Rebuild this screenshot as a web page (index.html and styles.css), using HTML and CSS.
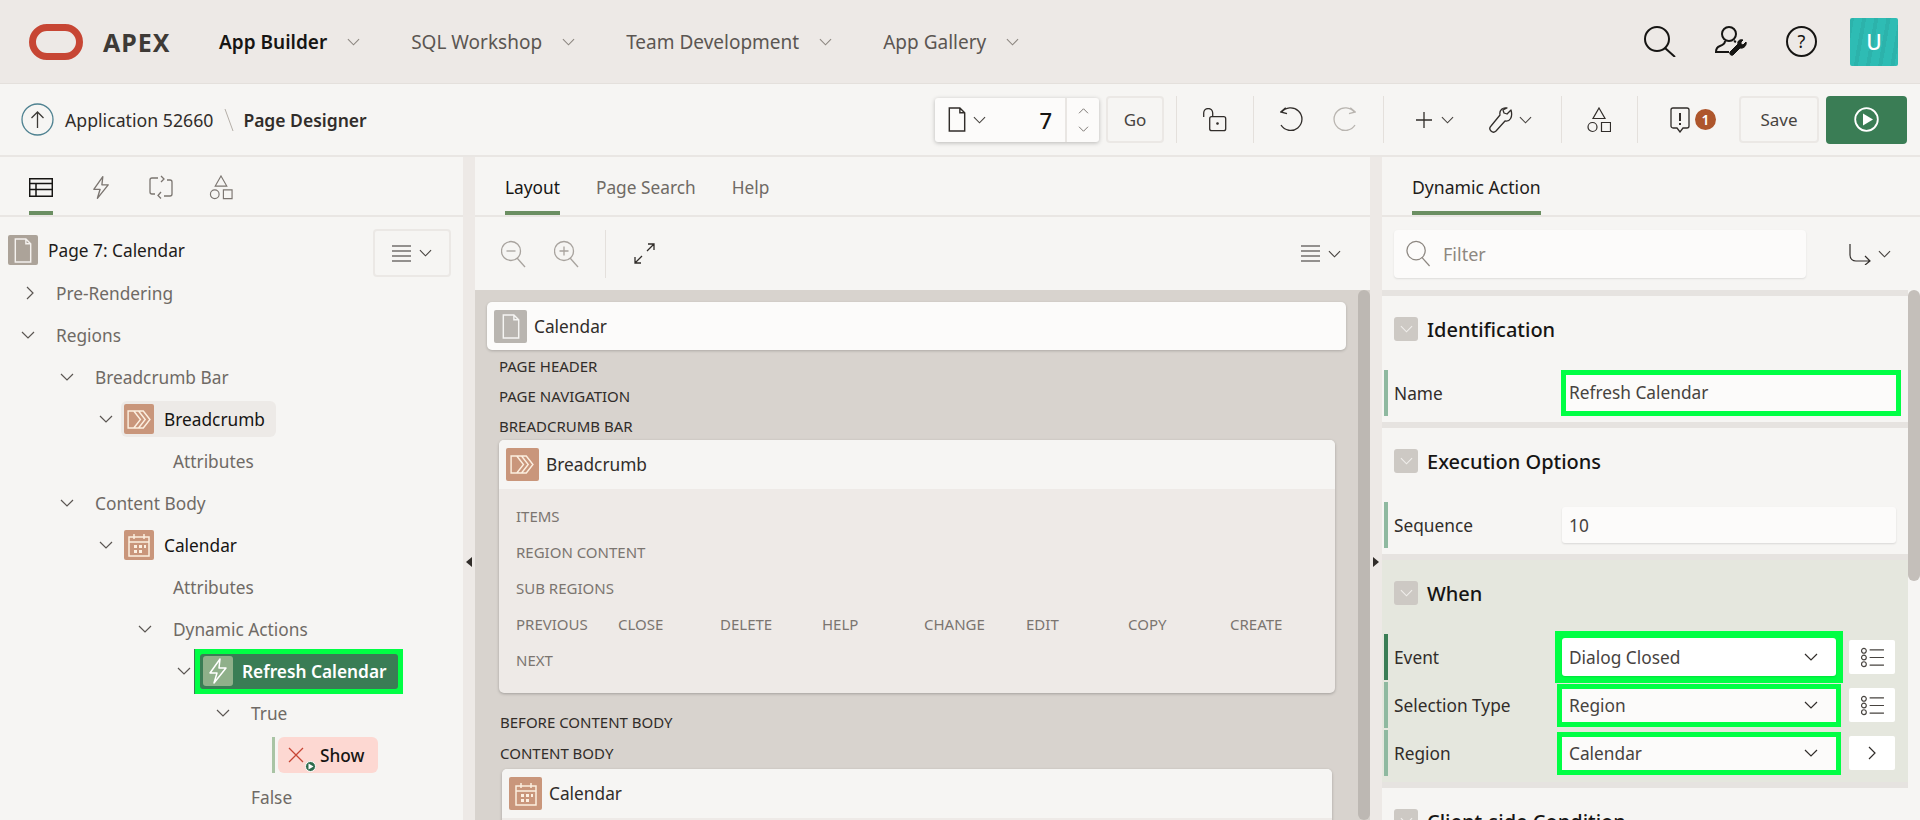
FILE: index.html
```html
<!DOCTYPE html>
<html lang="en">
<head>
    <meta charset="UTF-8">
    <title>Page Designer</title>
    <link rel="stylesheet" href="styles.css">
</head>
<body>
    <svg class="defs" width="0" height="0">
        <symbol id="chev" viewBox="0 0 14 8"><path d="M1 1l6 6 6-6" fill="none" stroke="currentColor" stroke-width="1.2"/></symbol>
        <symbol id="lines" viewBox="0 0 19 17"><path d="M0 1h19M0 6h19M0 11h19M0 16h19" stroke="currentColor" stroke-width="1.2"/></symbol>
        <symbol id="shapes" viewBox="0 0 24 26"><path d="M12 1l6 10.500H6zM14.500 15.500h9v9h-9z" fill="none" stroke="currentColor" stroke-width="1.200"/><circle cx="5.500" cy="20" r="4.500" fill="none" stroke="currentColor" stroke-width="1.200"/></symbol>
        <symbol id="bolt" viewBox="0 0 20 26"><path d="M12 1L2 15h7l-3 10 12-15h-7z" fill="none" stroke="currentColor" stroke-width="1.500" stroke-linejoin="round"/></symbol>
        <symbol id="doc" viewBox="0 0 18 26"><path d="M1 1h11l5 5v19H1zM12 1v5h5" fill="none" stroke="currentColor" stroke-width="1.500"/></symbol>
        <symbol id="crumb" viewBox="0 0 26 20"><path d="M1 1h16l7 9-7 9H1zM7 1l7 9-7 9M12 1l7 9-7 9" fill="none" stroke="currentColor" stroke-width="1.500"/></symbol>
        <symbol id="cal" viewBox="0 0 22 24"><path d="M1 4h20v19H1zM1 9h20M6 1v5M16 1v5" fill="none" stroke="currentColor" stroke-width="1.500"/><path d="M6 12h3v3H6zM11 12h3v3h-3zM16 12h2v3h-2zM6 17h3v3H6zM11 17h3v3h-3z" fill="currentColor"/></symbol>
        <symbol id="listopt" viewBox="0 0 26 22"><circle cx="4" cy="4" r="2.500" fill="none" stroke="currentColor" stroke-width="1.200"/><circle cx="4" cy="11" r="2.500" fill="none" stroke="currentColor" stroke-width="1.200"/><circle cx="4" cy="18" r="2.500" fill="none" stroke="currentColor" stroke-width="1.200"/><path d="M10 3h15M10 11h15M10 19h15" stroke="currentColor" stroke-width="1.200"/></symbol>
        <symbol id="wrench" viewBox="0 0 24 26"><path d="M22 3l-4 4-3-1-1-3 4-2c-4-1-8 2-7 7L2 19c-2 2-1 4 0 5s3 2 5 0l9-10c5 1 8-4 6-11z" fill="none" stroke="currentColor" stroke-width="1.300" stroke-linejoin="round"/></symbol>
        <symbol id="zoomlens" viewBox="0 0 25 28"><circle cx="10" cy="11" r="9.500" fill="none" stroke="currentColor" stroke-width="1.300"/><path d="M16 18l8 9" stroke="currentColor" stroke-width="1.300"/></symbol>
    </svg>

    <header class="topbar">
        <div class="logo">
            <svg width="54" height="36" viewBox="0 0 54 36"><rect x="3.500" y="3.500" width="47" height="29" rx="14.500" fill="none" stroke="#c74634" stroke-width="7"/></svg>
            <span class="logo-text">APEX</span>
        </div>
        <nav class="mainnav">
            <a class="navitem active">App Builder <svg class="navchev"><use href="#chev"/></svg></a>
            <a class="navitem">SQL Workshop <svg class="navchev"><use href="#chev"/></svg></a>
            <a class="navitem">Team Development <svg class="navchev"><use href="#chev"/></svg></a>
            <a class="navitem">App Gallery <svg class="navchev"><use href="#chev"/></svg></a>
        </nav>
        <div class="topicons">
            <svg width="32" height="31" viewBox="0 0 32 31" fill="none" stroke="#161513" stroke-width="2"><circle cx="13" cy="13" r="12"/><path d="M21 22l10 9"/></svg>
            <svg width="32" height="31" viewBox="0 0 32 31" fill="none" stroke="#161513" stroke-width="2"><circle cx="14" cy="8" r="7"/><path d="M10 15c0 3-2 4-5 5-3 1-4 3-4 6h13M19 15l2 1"/><path d="M31 16l-3 3-2-1 0-2 2-2c-3-1-6 1-5 4l-8 8c-1 2 1 4 3 3l7-7c4 1 7-3 6-6z" fill="#161513" stroke-width="1"/></svg>
            <svg class="helpicon" width="31" height="31" viewBox="0 0 31 31"><circle cx="15.500" cy="15.500" r="14.500" fill="none" stroke="#161513" stroke-width="2"/><text x="15.500" y="21.500" text-anchor="middle" class="helpmark">?</text></svg>
            <div class="avatar">U</div>
        </div>
    </header>

    <div class="toolbar">
        <div class="crumbs">
            <svg width="33" height="33" viewBox="0 0 33 33" fill="none"><circle cx="16.500" cy="16.500" r="15.500" stroke="#4f8291" stroke-width="1.300"/><path d="M16.500 25V9M10.500 15l6-6 6 6" stroke="#3d3a36" stroke-width="1.300"/></svg>
            <span class="crumb-app">Application 52660</span>
            <svg width="10" height="24" viewBox="0 0 10 24"><path d="M1 1l8 22" stroke="#b5afa8"/></svg>
            <span class="crumb-page">Page Designer</span>
        </div>
        <div class="tools">
            <div class="pagepick">
                <div class="pagepick-main">
                    <svg width="18" height="25" class="ink"><use href="#doc"/></svg>
                    <svg class="chev-sm ink2"><use href="#chev"/></svg>
                    <span class="pagenum">7</span>
                </div>
                <div class="pagepick-spin">
                    <svg class="chev-xs flip"><use href="#chev"/></svg>
                    <svg class="chev-xs"><use href="#chev"/></svg>
                </div>
            </div>
            <button class="btn go">Go</button>
            <span class="sep sep-a"></span>
            <svg class="lock" width="24" height="24" viewBox="0 0 24 24" fill="none" stroke="#312d2a" stroke-width="1.300"><rect x="6.700" y="8.700" width="16" height="14" rx="2"/><path d="M.700 9V5a4.500 4.500 0 0 1 9 0v3.500"/><circle cx="14.500" cy="15.500" r=".7" fill="#312d2a"/></svg>
            <span class="sep sep-b"></span>
            <svg class="undo" width="24" height="26" viewBox="0 0 24 26" fill="none" stroke="#312d2a" stroke-width="1.300"><path d="M1.500 5.500A11.300 11.300 0 1 1 1 18M5.700.700L.700 5 7 6.700"/></svg>
            <svg class="redo" width="24" height="26" viewBox="0 0 24 26" fill="none" stroke="#b9b5b0" stroke-width="1.300"><path d="M22.500 5.500A11.300 11.300 0 1 0 23 18M18.300.700L23.300 5 17 6.700"/></svg>
            <span class="sep sep-c"></span>
            <svg class="plus" width="16" height="16" viewBox="0 0 16 16"><path d="M8 0v16M0 8h16" stroke="#312d2a" stroke-width="1.300"/></svg>
            <svg class="chev-sm after-plus ink2"><use href="#chev"/></svg>
            <svg class="wrench ink" width="24" height="26"><use href="#wrench"/></svg>
            <svg class="chev-sm after-wrench ink2"><use href="#chev"/></svg>
            <span class="sep sep-d"></span>
            <svg class="shapes ink" width="24" height="26"><use href="#shapes"/></svg>
            <span class="sep sep-e"></span>
            <svg class="msg" width="20" height="26" viewBox="0 0 20 26" fill="none" stroke="#312d2a" stroke-width="1.300"><path d="M3 1h14a2 2 0 0 1 2 2v16a2 2 0 0 1-2 2h-4l-3 4-3-4H3a2 2 0 0 1-2-2V3a2 2 0 0 1 2-2z"/><path d="M10 6v8M10 16v2" stroke-width="2"/></svg>
            <span class="badge">1</span>
            <button class="btn save">Save</button>
            <button class="btn run">
                <svg width="25" height="25" viewBox="0 0 25 25"><circle cx="12.500" cy="12.500" r="11.300" fill="none" stroke="#fff" stroke-width="1.800"/><path d="M9 6.500l10 6-10 6z" fill="#fff"/></svg>
            </button>
        </div>
    </div>

    <main class="designer">
        <section class="panel panel-left">
            <div class="tabs tabs-icons">
                <a class="tab-icon active">
                    <svg width="24" height="19" viewBox="0 0 24 19" fill="none" stroke="#161513" stroke-width="1.500"><path d="M.700.700h22.600v17.600H.700zM.700 5.500h22.600M.700 11.500h22.600M7 5.500v13"/></svg>
                </a>
                <a class="tab-icon gap-a"><svg class="grey" width="18" height="25"><use href="#bolt"/></svg></a>
                <a class="tab-icon gap-b">
                    <svg width="24" height="24" viewBox="0 0 24 24" fill="none" stroke="#7b7570" stroke-width="1.300"><path d="M9 3H3a2 2 0 0 0-2 2v12a2 2 0 0 0 2 2h3M15 21h6a2 2 0 0 0 2-2V7a2 2 0 0 0-2-2h-3M12 1l3 3-3 3M12 17l-3 3.500 3 3"/></svg>
                </a>
                <a class="tab-icon gap-c"><svg class="grey" width="24" height="25"><use href="#shapes"/></svg></a>
            </div>
            <div class="tree">
                <div class="tree-root">
                    <span class="node-icon grey-bg"><svg width="18" height="25"><use href="#doc"/></svg></span>
                    <span class="root-label">Page 7: Calendar</span>
                    <button class="menu-btn"><svg class="lines-ic"><use href="#lines"/></svg><svg class="chev-sm ink2"><use href="#chev"/></svg></button>
                </div>
                <div class="row l0"><svg class="tw right" width="8" height="14" viewBox="0 0 8 14"><path d="M1 1l6 6-6 6" fill="none" stroke="#5b5652" stroke-width="1.200"/></svg><span class="lbl">Pre-Rendering</span></div>
                <div class="row l0"><svg class="tw"><use href="#chev"/></svg><span class="lbl">Regions</span></div>
                <div class="row l1"><svg class="tw"><use href="#chev"/></svg><span class="lbl">Breadcrumb Bar</span></div>
                <div class="row l2">
                    <svg class="tw"><use href="#chev"/></svg>
                    <span class="chip chip-hover"><span class="node-icon tan"><svg width="25" height="19"><use href="#crumb"/></svg></span><span class="lbl dark">Breadcrumb</span></span>
                </div>
                <div class="row l3 leaf"><span class="lbl">Attributes</span></div>
                <div class="row l1"><svg class="tw"><use href="#chev"/></svg><span class="lbl">Content Body</span></div>
                <div class="row l2">
                    <svg class="tw"><use href="#chev"/></svg>
                    <span class="chip"><span class="node-icon tan"><svg width="22" height="24"><use href="#cal"/></svg></span><span class="lbl dark">Calendar</span></span>
                </div>
                <div class="row l3 leaf"><span class="lbl">Attributes</span></div>
                <div class="row l3"><svg class="tw"><use href="#chev"/></svg><span class="lbl">Dynamic Actions</span></div>
                <div class="row l4">
                    <svg class="tw"><use href="#chev"/></svg>
                    <span class="chip-frame">
                        <span class="chip-selected"><span class="node-icon bolt-bg"><svg width="20" height="26"><use href="#bolt"/></svg></span><span class="lbl sel">Refresh Calendar</span></span>
                    </span>
                </div>
                <div class="row l5"><svg class="tw"><use href="#chev"/></svg><span class="lbl">True</span></div>
                <div class="row l6">
                    <span class="action-bar"></span>
                    <span class="chip-show">
                        <svg width="16" height="16" viewBox="0 0 16 16"><path d="M1 1l14 14M15 1L1 15" stroke="#c74634" stroke-width="1.300"/></svg>
                        <span class="run-dot"><svg width="9" height="9" viewBox="0 0 9 9"><path d="M2.500 1.500l5 3-5 3z" fill="#fff"/></svg></span>
                        <span class="lbl dark show-lbl">Show</span>
                    </span>
                </div>
                <div class="row l5 leaf"><span class="lbl">False</span></div>
            </div>
            <span class="grip grip-left"></span>
        </section>

        <section class="panel panel-mid">
            <div class="tabs">
                <a class="tab active">Layout</a>
                <a class="tab">Page Search</a>
                <a class="tab">Help</a>
            </div>
            <div class="mid-tools">
                <svg width="25" height="28" viewBox="0 0 25 28" fill="none" stroke="currentColor" stroke-width="1.300"><use href="#zoomlens"/><path d="M5.500 11h9"/></svg>
                <svg class="lens-in" width="25" height="28" viewBox="0 0 25 28" fill="none" stroke="currentColor" stroke-width="1.300"><use href="#zoomlens"/><path d="M5.500 11h9M10 6.500v9"/></svg>
                <span class="sep mid-sep"></span>
                <svg class="expand" width="21" height="21" viewBox="0 0 21 21" fill="none" stroke="#312d2a" stroke-width="1.300"><path d="M1 20l7-7M13 8l7-7M14 1h6v6M1 14v6h6"/></svg>
                <span class="spacer"></span>
                <svg class="lines-ic"><use href="#lines"/></svg>
                <svg class="chev-sm ink2"><use href="#chev"/></svg>
            </div>
            <div class="canvas">
                <div class="page-card">
                    <span class="node-icon grey-light"><svg width="18" height="25"><use href="#doc"/></svg></span>
                    <span class="card-title">Calendar</span>
                </div>
                <div class="slot s1">PAGE HEADER</div>
                <div class="slot s2">PAGE NAVIGATION</div>
                <div class="slot s3">BREADCRUMB BAR</div>
                <div class="region">
                    <div class="region-head">
                        <span class="node-icon tan big"><svg width="25" height="19"><use href="#crumb"/></svg></span>
                        <span class="card-title">Breadcrumb</span>
                    </div>
                    <div class="region-body">
                        <div class="sub">ITEMS</div>
                        <div class="sub">REGION CONTENT</div>
                        <div class="sub">SUB REGIONS</div>
                        <div class="sub-grid">
                            <span>PREVIOUS</span><span>CLOSE</span><span>DELETE</span><span>HELP</span>
                            <span>CHANGE</span><span>EDIT</span><span>COPY</span><span>CREATE</span>
                            <span>NEXT</span>
                        </div>
                    </div>
                </div>
                <div class="slot s4">BEFORE CONTENT BODY</div>
                <div class="slot s5">CONTENT BODY</div>
                <div class="region region-cal">
                    <div class="region-head">
                        <span class="node-icon tan big"><svg width="22" height="24"><use href="#cal"/></svg></span>
                        <span class="card-title">Calendar</span>
                    </div>
                    <div class="region-body"></div>
                </div>
                <span class="scroll-thumb mid-thumb"></span>
            </div>
        </section>

        <section class="panel panel-right">
            <div class="tabs">
                <a class="tab active da">Dynamic Action</a>
            </div>
            <div class="filter-row">
                <div class="filter">
                    <svg width="25" height="27" class="filter-lens"><use href="#zoomlens"/></svg>
                    <span>Filter</span>
                </div>
                <svg class="collapse" width="22" height="22" viewBox="0 0 22 22" fill="none" stroke="#312d2a" stroke-width="1.200"><path d="M1 1v11c0 4 3 6 6 6h14M16 13l5 5-5 4"/></svg>
                <svg class="chev-sm ink2"><use href="#chev"/></svg>
            </div>
            <div class="props">
                <div class="group g-id">
                    <h3 class="group-title"><span class="toggle"><svg><use href="#chev"/></svg></span>Identification</h3>
                    <div class="prop">
                        <span class="prop-label">Name</span>
                        <div class="field marked name-field"><span>Refresh Calendar</span></div>
                    </div>
                </div>
                <div class="group g-exec">
                    <h3 class="group-title"><span class="toggle"><svg><use href="#chev"/></svg></span>Execution Options</h3>
                    <div class="prop">
                        <span class="prop-label">Sequence</span>
                        <div class="field"><span>10</span></div>
                    </div>
                </div>
                <div class="group g-when">
                    <h3 class="group-title"><span class="toggle"><svg><use href="#chev"/></svg></span>When</h3>
                    <div class="prop req">
                        <span class="prop-label">Event</span>
                        <div class="field-frame">
                            <div class="field select white"><span>Dialog Closed</span><svg class="chev-sel"><use href="#chev"/></svg></div>
                        </div>
                        <button class="sidebtn"><svg width="25" height="21"><use href="#listopt"/></svg></button>
                    </div>
                    <div class="prop">
                        <span class="prop-label">Selection Type</span>
                        <div class="field marked select short"><span>Region</span><svg class="chev-sel"><use href="#chev"/></svg></div>
                        <button class="sidebtn"><svg width="25" height="21"><use href="#listopt"/></svg></button>
                    </div>
                    <div class="prop">
                        <span class="prop-label">Region</span>
                        <div class="field marked select short"><span>Calendar</span><svg class="chev-sel"><use href="#chev"/></svg></div>
                        <button class="sidebtn"><svg width="8" height="14" viewBox="0 0 8 14"><path d="M1 1l6 6-6 6" fill="none" stroke="#312d2a" stroke-width="1.200"/></svg></button>
                    </div>
                </div>
                <div class="group g-client">
                    <h3 class="group-title"><span class="toggle"><svg><use href="#chev"/></svg></span>Client-side Condition</h3>
                </div>
                <span class="scroll-thumb right-thumb"></span>
            </div>
            <span class="grip grip-right"></span>
        </section>
    </main>
</body>
</html>
```
FILE: styles.css
```css
html, body {
    margin: 0;
    height: 820px;
    overflow: hidden;
}
body {
    font-family: "Noto Sans", sans-serif;
    font-size: 16px;
    color: #312d2a;
    background-color: #ede9e6;
}
.defs {
    position: absolute;
}
button {
    font-family: inherit;
}
svg {
    display: block;
    flex: none;
}
.ink {
    color: #312d2a;
}
.ink2 {
    color: #47433f;
}

/* top header */
.topbar {
    height: 83px;
    display: flex;
    align-items: center;
    padding: 0 22px 0 29px;
    border-bottom: 1px solid #e4e0dc;
}
.logo {
    display: flex;
    align-items: center;
    gap: 20px;
    width: 190px;
}
.logo-text {
    font-size: 25px;
    font-weight: 700;
    letter-spacing: 1px;
    color: #3e3a36;
}
.mainnav {
    display: flex;
    flex: 1;
}
.navitem {
    display: flex;
    align-items: center;
    gap: 20px;
    margin-right: 51px;
    font-size: 19px;
    color: #5b5652;
}
.navitem.active {
    color: #161513;
    font-weight: 600;
}
.navchev {
    width: 13px;
    height: 8px;
    color: #8d8781;
}
.topicons {
    display: flex;
    align-items: center;
    gap: 39px;
}
.helpmark {
    font-size: 18px;
    fill: #161513;
}
.avatar {
    width: 48px;
    height: 48px;
    border-radius: 2px;
    background-color: #2ebcb4;
    background-image: repeating-linear-gradient(100deg, rgba(0, 0, 0, .05) 0 4px, transparent 4px 12px);
    color: #fff;
    font-size: 21px;
    font-weight: 500;
    display: flex;
    align-items: center;
    justify-content: center;
    margin-left: -6px;
}

/* second bar */
.toolbar {
    height: 71px;
    display: flex;
    align-items: center;
    justify-content: space-between;
    padding: 0 13px 0 21px;
    background-color: #f6f5f3;
    border-bottom: 2px solid #e9e6e3;
}
.crumbs {
    display: flex;
    align-items: center;
}
.crumb-app {
    margin-left: 11px;
    margin-right: 11px;
    font-size: 17.7px;
}
.crumb-page {
    margin-left: 9px;
    font-size: 17.5px;
    font-weight: 600;
}
.tools {
    display: flex;
    align-items: center;
}
.pagepick {
    width: 164px;
    height: 44px;
    display: flex;
    background-color: #fcfbfa;
    border-radius: 3px;
    box-shadow: 0 1px 4px rgba(0, 0, 0, .25);
}
.pagepick-main {
    flex: 1;
    display: flex;
    align-items: center;
    padding: 0 13px;
    gap: 7px;
}
.pagenum {
    margin-left: auto;
    font-size: 22px;
    color: #161513;
    font-weight: 500;
}
.pagepick-spin {
    width: 34px;
    border-left: 2px solid #e9e6e3;
    display: flex;
    flex-direction: column;
    align-items: center;
    justify-content: space-around;
    padding: 4px 0;
    box-sizing: border-box;
}
.chev-sm {
    width: 13px;
    height: 8px;
}
.chev-xs {
    width: 11px;
    height: 6px;
    color: #6f6a65;
}
.flip {
    transform: scaleY(-1);
}
.btn {
    height: 47px;
    background-color: #f6f5f3;
    border: 2px solid #ebe8e5;
    border-radius: 4px;
    font-size: 17px;
    color: #47433f;
    padding: 0;
}
.btn.go {
    width: 58px;
    margin-left: 7px;
}
.sep {
    width: 1px;
    height: 47px;
    background-color: #e4e0dc;
}
.sep-a {
    margin-left: 12px;
}
.lock {
    margin-left: 26px;
}
.sep-b {
    margin-left: 26px;
}
.undo {
    margin-left: 26px;
}
.redo {
    margin-left: 28px;
}
.sep-c {
    margin-left: 27px;
}
.plus {
    margin-left: 32px;
}
.after-plus {
    margin-left: 9px;
}
.wrench {
    margin-left: 35px;
}
.after-wrench {
    margin-left: 6px;
}
.sep-d {
    margin-left: 29px;
}
.shapes {
    margin-left: 25px;
}
.sep-e {
    margin-left: 26px;
}
.msg {
    margin-left: 32px;
}
.badge {
    width: 21px;
    height: 21px;
    margin-left: 5px;
    border-radius: 50%;
    background-color: #ae562c;
    color: #fff;
    font-size: 14px;
    font-weight: 600;
    display: flex;
    align-items: center;
    justify-content: center;
}
.btn.save {
    width: 80px;
    margin-left: 23px;
}
.btn.run {
    width: 81px;
    height: 48px;
    margin-left: 7px;
    background-color: #3a7d55;
    border: none;
    display: flex;
    align-items: center;
    justify-content: center;
}

/* three panels */
.designer {
    display: flex;
    height: 663px;
    gap: 12px;
}
.panel {
    position: relative;
    background-color: #f6f5f3;
    flex: none;
}
.panel-left {
    width: 463px;
}
.panel-mid {
    width: 895px;
}
.panel-right {
    width: 538px;
}
.tabs {
    height: 58px;
    display: flex;
    gap: 36px;
    padding-left: 30px;
    border-bottom: 2px solid #e9e6e3;
}
.tab {
    height: 48px;
    padding-top: 6px;
    display: flex;
    align-items: center;
    border-bottom: 4px solid transparent;
    font-size: 17.3px;
    color: #6f6a65;
}
.tab.active {
    color: #161513;
    border-bottom-color: #6b8f62;
}
.tab.da {
    color: #1e1c1a;
    font-size: 17.6px;
}
.tabs-icons {
    gap: 0;
    padding-left: 29px;
}
.tab-icon {
    height: 48px;
    padding-top: 6px;
    display: flex;
    align-items: center;
    border-bottom: 4px solid transparent;
}
.tab-icon.active {
    border-bottom-color: #6b8f62;
}
.grey {
    color: #7b7570;
}
.gap-a {
    margin-left: 39px;
}
.gap-b {
    margin-left: 39px;
}
.gap-c {
    margin-left: 36px;
}

/* tree */
.tree {
    padding-top: 12px;
}
.tree-root {
    height: 48px;
    display: flex;
    align-items: center;
    padding: 0 12px 0 8px;
    margin-bottom: -5px;
}
.tree-root .node-icon {
    margin-bottom: 6px;
}
.root-label {
    margin-left: 10px;
    margin-bottom: 6px;
    font-size: 17.3px;
    color: #1e1c1a;
}
.menu-btn {
    margin-left: auto;
    width: 78px;
    height: 48px;
    background-color: #f6f5f3;
    border: 2px solid #ebe8e5;
    border-radius: 4px;
    display: flex;
    align-items: center;
    justify-content: center;
    gap: 8px;
    padding: 0;
}
.lines-ic {
    width: 19px;
    height: 17px;
    color: #312d2a;
}
.node-icon {
    width: 30px;
    height: 30px;
    flex: none;
    border-radius: 2px;
    display: flex;
    align-items: center;
    justify-content: center;
    color: #fcefe0;
}
.grey-bg {
    background-color: #aca399;
    color: #f4f1ee;
}
.grey-light {
    width: 33px;
    height: 33px;
    background-color: #b9b5b0;
    color: #f6f5f3;
}
.tan {
    background-color: #c9967b;
}
.big {
    width: 33px;
    height: 33px;
}
.bolt-bg {
    background-color: #8fb08a;
    color: #fff;
    border-radius: 3px;
}
.row {
    height: 42px;
    display: flex;
    align-items: center;
    font-size: 17.3px;
}
.row .lbl {
    color: #6f6a65;
}
.row .lbl.dark {
    color: #161513;
}
.row .lbl.sel {
    color: #fff;
    font-weight: 600;
}
.tw {
    width: 14px;
    height: 8px;
    color: #5b5652;
    margin-right: 15px;
}
.l0 {
    padding-left: 21px;
}
.l0 .tw.right {
    width: 8px;
    height: 14px;
    margin-left: 5px;
    margin-right: 22px;
}
.l0 .tw:not(.right) {
    margin-right: 21px;
}
.l1 {
    padding-left: 60px;
}
.l1 .tw {
    margin-right: 21px;
}
.l2 {
    padding-left: 99px;
}
.l2 .tw {
    margin-right: 10px;
}
.l3 {
    padding-left: 138px;
}
.l3 .tw {
    margin-right: 21px;
}
.l3.leaf {
    padding-left: 173px;
}
.l4 {
    padding-left: 177px;
}
.l4 .tw {
    margin-right: 3px;
}
.l5 {
    padding-left: 216px;
}
.l5 .tw {
    margin-right: 21px;
}
.l5.leaf {
    padding-left: 251px;
}
.l6 {
    padding-left: 272px;
}
.chip {
    height: 36px;
    display: flex;
    align-items: center;
    gap: 10px;
    padding: 0 11px 0 3px;
    border-radius: 6px;
    margin-left: -2px;
}
.chip-hover {
    background-color: #edeae7;
}
.chip-frame {
    padding: 5px;
    background-color: #00ff44;
    border-left: 1.500px solid #3a7d55;
    margin: -3px 0;
}
.chip-selected {
    height: 35px;
    width: 198px;
    box-sizing: border-box;
    display: flex;
    align-items: center;
    gap: 9px;
    padding-left: 3px;
    background-color: #3a7d55;
    border-radius: 3px;
}
.action-bar {
    width: 3px;
    height: 36px;
    background-color: #a9c4a4;
}
.chip-show {
    position: relative;
    width: 100px;
    height: 36px;
    margin-left: 3px;
    background-color: #fdd8d2;
    border-radius: 6px;
    display: flex;
    align-items: center;
    padding-left: 10px;
    box-sizing: border-box;
}
.show-lbl {
    margin-left: 16px;
    font-weight: 500;
}
.run-dot {
    position: absolute;
    left: 27px;
    top: 24px;
    width: 9px;
    height: 9px;
    border-radius: 50%;
    background-color: #2f6b4c;
    border: 1.500px solid #fff;
}
.grip {
    position: absolute;
    width: 0;
    height: 0;
    border: 5px solid transparent;
    top: 400px;
}
.grip-left {
    right: -9px;
    border-right-color: #312d2a;
    border-left: none;
    border-right-width: 6px;
}
.grip-right {
    left: -9px;
    border-left-color: #312d2a;
    border-right: none;
    border-left-width: 6px;
}

/* layout panel */
.mid-tools {
    height: 73px;
    display: flex;
    align-items: center;
    padding: 0 29px 0 26px;
    color: #a8a39e;
}
.lens-in {
    margin-left: 28px;
}
.mid-sep {
    margin-left: 26px;
    height: 48px;
}
.expand {
    margin-left: 28px;
}
.spacer {
    flex: 1;
}
.mid-tools .chev-sm {
    margin-left: 8px;
}
.canvas {
    position: relative;
    height: 530px;
    background-color: #d8d3ce;
    padding: 12px 24px 0 12px;
    overflow: hidden;
}
.scroll-thumb {
    position: absolute;
    top: 0;
    right: 0;
    width: 12px;
    border-radius: 6px;
}
.mid-thumb {
    height: 530px;
    background-color: #bdb8b3;
}
.page-card {
    height: 48px;
    display: flex;
    align-items: center;
    gap: 7px;
    padding-left: 7px;
    background-color: #fcfbfa;
    border-radius: 5px;
    box-shadow: 0 1px 3px rgba(0, 0, 0, .2);
}
.card-title {
    font-size: 17.3px;
    color: #312d2a;
}
.slot {
    height: 30px;
    display: flex;
    align-items: center;
    padding-left: 12px;
    font-size: 15px;
    color: #312d2a;
}
.s1 {
    margin-top: 1px;
}
.s3 {
    height: 29px;
}
.s4 {
    margin: 13px 0 0 13px;
    padding-left: 0;
    height: 31px;
}
.s5 {
    margin: 0 0 0 13px;
    padding-left: 0;
    height: 32px;
}
.region {
    margin: 0 11px 0 12px;
    background-color: #eeeae7;
    border-radius: 5px;
    box-shadow: 0 1px 3px rgba(0, 0, 0, .25);
}
.region-cal {
    margin: 0 14px 0 15px;
    min-height: 100px;
}
.region-head {
    height: 49px;
    display: flex;
    align-items: center;
    gap: 7px;
    padding-left: 7px;
    background-color: #f6f5f3;
    border-radius: 5px 5px 0 0;
}
.region-body {
    padding: 9px 0 15px 17px;
    font-size: 15px;
    color: #7b7570;
}
.sub {
    height: 36px;
    display: flex;
    align-items: center;
}
.sub-grid {
    display: grid;
    grid-template-columns: repeat(8, 102px);
    grid-auto-rows: 36px;
    align-items: center;
}

/* property editor */
.filter-row {
    height: 73px;
    display: flex;
    align-items: center;
    padding-left: 12px;
}
.filter {
    width: 412px;
    height: 48px;
    display: flex;
    align-items: center;
    gap: 12px;
    padding-left: 12px;
    box-sizing: border-box;
    background-color: #fcfbfa;
    border-radius: 4px;
    box-shadow: 0 1px 2px rgba(0, 0, 0, .1);
    font-size: 18px;
    color: #8d8781;
}
.collapse {
    margin-left: 43px;
}
.filter-row .chev-sm {
    margin-left: 7px;
}
.props {
    position: relative;
    height: 530px;
    overflow: hidden;
}
.right-thumb {
    height: 291px;
    background-color: #c4bfba;
}
.group {
    box-sizing: border-box;
    margin-right: 12px;
    border-top: 6px solid #e6e3e0;
}
.g-id {
    height: 132px;
}
.g-exec {
    height: 132px;
}
.g-when {
    height: 228px;
    background-color: #e5e7de;
}
.g-client {
    height: 60px;
}
.group-title {
    height: 66px;
    margin: 0;
    display: flex;
    align-items: center;
    gap: 9px;
    padding-left: 12px;
    box-sizing: border-box;
    font-size: 20px;
    font-weight: 500;
    color: #161513;
}
.toggle {
    width: 24px;
    height: 24px;
    background-color: #cdc9c4;
    border-radius: 3px;
    display: flex;
    align-items: center;
    justify-content: center;
    color: #f0eeeb;
}
.toggle svg {
    width: 13px;
    height: 8px;
}
.prop {
    height: 46px;
    margin: 0 0 2px 2px;
    display: flex;
    align-items: center;
    border-left: 4px solid #8fb9a0;
    font-size: 17.3px;
}
.g-id .prop {
    margin-top: 8px;
}
.g-exec .prop {
    margin-top: 8px;
}
.g-when .prop:nth-child(2) {
    margin-top: 8px;
}
.prop.req {
    border-left-color: #3a7d55;
}
.prop-label {
    width: 174px;
    padding-left: 6px;
    flex: none;
    color: #312d2a;
    box-sizing: border-box;
}
.field {
    width: 334px;
    height: 36px;
    display: flex;
    align-items: center;
    padding: 0 18px 0 7px;
    box-sizing: border-box;
    background-color: #fcfbfa;
    border-radius: 3px;
    box-shadow: 0 1px 2px rgba(0, 0, 0, .12);
    color: #47433f;
}
.select {
    width: 274px;
    justify-content: space-between;
}
.marked {
    outline: 5px solid #00ff44;
    border-radius: 0;
}
.name-field {
    width: 330px;
    margin-left: 4px;
    margin-top: -1px;
    padding-left: 3px;
}
.field-frame {
    margin: -7px;
    padding: 7px;
    background-color: #00ff44;
    display: flex;
}
.field-frame .field {
    height: 38px;
}
.white {
    background-color: #fff;
}
.short {
    height: 33px;
}
.chev-sel {
    width: 14px;
    height: 8px;
    color: #312d2a;
}
.sidebtn {
    width: 46px;
    height: 34px;
    margin-left: 13px;
    padding: 0;
    border: none;
    background-color: #fff;
    border-radius: 2px;
    display: flex;
    align-items: center;
    justify-content: center;
    color: #47433f;
}
```
